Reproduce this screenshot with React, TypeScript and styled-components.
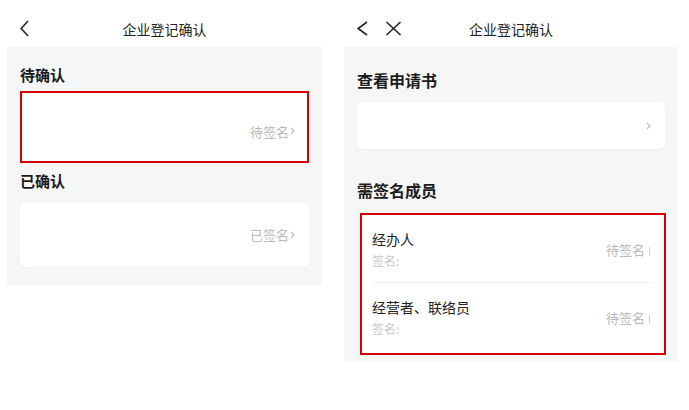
import { createGlobalStyle, styled } from "styled-components";

const GlobalStyle = createGlobalStyle`
  html, body {
    margin: 0;
    padding: 0;
    background: #fff;
  }
  body {
    font-family: "Noto Sans CJK SC", "Noto Sans", sans-serif;
    color: #1f1f1f;
  }
`;

const Page = styled.div`
  display: flex;
  align-items: flex-start;
  gap: 22px;
  padding-left: 7px;
`;

const Screen = styled.div<{ $width: number }>`
  width: ${(p) => p.$width}px;
  display: flex;
  flex-direction: column;
`;

const Header = styled.div`
  height: 47px;
  box-sizing: border-box;
  padding: 10px 13px 0;
  display: grid;
  grid-template-columns: 1fr auto 1fr;
  align-items: center;
`;

const NavIcons = styled.div`
  display: flex;
  align-items: center;
  gap: 17px;
  color: #2a2a2a;
`;

const HeaderTitle = styled.div`
  font-size: 14px;
  line-height: 20px;
  color: #222;
`;

const Body = styled.div<{ $pad: string }>`
  background: #f5f6f8;
  padding: ${(p) => p.$pad};
  display: flex;
  flex-direction: column;
`;

const SectionTitle = styled.div<{ $size: number; $mt?: number; $mb: number }>`
  font-size: ${(p) => p.$size}px;
  line-height: 20px;
  font-weight: 700;
  color: #1c1c1c;
  margin-top: ${(p) => p.$mt ?? 0}px;
  margin-bottom: ${(p) => p.$mb}px;
`;

const Card = styled.div<{ $height: number; $marked?: boolean }>`
  box-sizing: border-box;
  height: ${(p) => p.$height}px;
  background: #fff;
  border-radius: ${(p) => (p.$marked ? 0 : 6)}px;
  border: ${(p) => (p.$marked ? "2px solid #d40000" : "none")};
  box-shadow: ${(p) => (p.$marked ? "none" : "0 1px 3px rgba(0,0,0,0.03)")};
  display: flex;
  align-items: center;
  justify-content: flex-end;
  padding: ${(p) => (p.$marked ? "8px 12px 0 0" : "0 14px 0 0")};
`;

const Status = styled.span`
  font-size: 13px;
  color: #b9b9b9;
  display: inline-flex;
  align-items: center;
  gap: 1px;
`;

const MemberBox = styled.div`
  box-sizing: border-box;
  height: 142px;
  margin: 0 -1px 0 3px;
  background: #fff;
  border: 2px solid #d40000;
  display: flex;
  flex-direction: column;
`;

const MemberRow = styled.div<{ $pb: number }>`
  display: flex;
  align-items: center;
  justify-content: space-between;
  padding: 14px 14px ${(p) => p.$pb}px 10px;
`;

const MemberInfo = styled.div`
  display: flex;
  flex-direction: column;
  gap: 4px;
`;

const MemberName = styled.div`
  font-size: 14px;
  line-height: 20px;
  color: #222;
`;

const SignLabel = styled.div`
  font-size: 12px;
  line-height: 16px;
  color: #c6c6c6;
`;

const Divider = styled.div`
  height: 1px;
  background: #f0f0f0;
  margin: 0 12px 0 10px;
`;

const Stub = styled.span`
  width: 1px;
  height: 9px;
  margin-left: 3px;
  margin-top: 5px;
  background: #d0d0d0;
`;

const Back = ({ w, h }: { w: number; h: number }) => (
  <svg width={w} height={h} viewBox={`0 0 ${w} ${h}`} fill="none">
    <polyline
      points={`${w - 1},1 1.2,${h / 2} ${w - 1},${h - 1}`}
      stroke="currentColor"
      strokeWidth="1.7"
      strokeLinejoin="miter"
    />
  </svg>
);

const Close = () => (
  <svg width="17" height="15" viewBox="0 0 17 15" fill="none">
    <path d="M1.5 1L15.5 14M15.5 1L1.5 14" stroke="currentColor" strokeWidth="1.7" />
  </svg>
);

const Chevron = () => (
  <svg width="5" height="8" viewBox="0 0 5 8" fill="none">
    <polyline points="1,1 4,4 1,7" stroke="#bdbdbd" strokeWidth="1.2" />
  </svg>
);

const members = [
  { name: "经办人", pb: 13 },
  { name: "经营者、联络员", pb: 16 },
];

export default function App() {
  return (
    <>
      <GlobalStyle />
      <Page>
        <Screen $width={315}>
          <Header>
            <NavIcons>
              <Back w={9} h={17} />
            </NavIcons>
            <HeaderTitle>企业登记确认</HeaderTitle>
            <div />
          </Header>
          <Body $pad="18px 13px 18px 13px">
            <SectionTitle $size={15} $mb={6}>待确认</SectionTitle>
            <Card $height={72} $marked>
              <Status>
                待签名<Chevron />
              </Status>
            </Card>
            <SectionTitle $size={15} $mt={8} $mb={11}>已确认</SectionTitle>
            <Card $height={65}>
              <Status>
                已签名<Chevron />
              </Status>
            </Card>
          </Body>
        </Screen>
        <Screen $width={334}>
          <Header>
            <NavIcons>
              <Back w={11} h={15} />
              <Close />
            </NavIcons>
            <HeaderTitle>企业登记确认</HeaderTitle>
            <div />
          </Header>
          <Body $pad="23px 13px 7px 13px">
            <SectionTitle $size={16} $mb={12}>查看申请书</SectionTitle>
            <Card $height={47}>
              <Status>
                <Chevron />
              </Status>
            </Card>
            <SectionTitle $size={16} $mt={31} $mb={13}>需签名成员</SectionTitle>
            <MemberBox>
              {members.map((m, i) => (
                <div key={m.name}>
                  {i > 0 && <Divider />}
                  <MemberRow $pb={m.pb}>
                    <MemberInfo>
                      <MemberName>{m.name}</MemberName>
                      <SignLabel>签名:</SignLabel>
                    </MemberInfo>
                    <Status>
                      待签名<Stub />
                    </Status>
                  </MemberRow>
                </div>
              ))}
            </MemberBox>
          </Body>
        </Screen>
      </Page>
    </>
  );
}
